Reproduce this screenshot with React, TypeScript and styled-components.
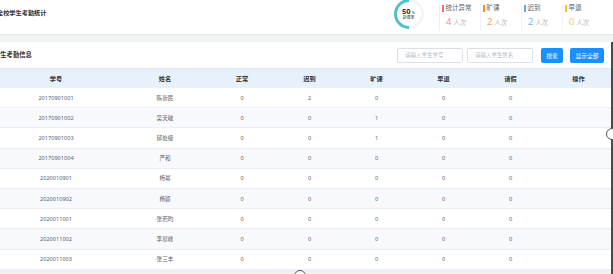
import * as React from 'react';
import styled, {createGlobalStyle} from 'styled-components';

type Student = {
  id: string;
  name: string;
  normal: number;
  late: number;
  absent: number;
  early: number;
  leave: number;
};

const students: Student[] = [
  {id: '20170901001', name: '陈新民', normal: 0, late: 2, absent: 0, early: 0, leave: 0},
  {id: '20170901002', name: '吴天敏', normal: 0, late: 0, absent: 1, early: 0, leave: 0},
  {id: '20170901003', name: '邱处级', normal: 0, late: 0, absent: 1, early: 0, leave: 0},
  {id: '20170901004', name: '严和', normal: 0, late: 0, absent: 0, early: 0, leave: 0},
  {id: '2020010901', name: '杨幂', normal: 0, late: 0, absent: 0, early: 0, leave: 0},
  {id: '2020010902', name: '杨颖', normal: 0, late: 0, absent: 0, early: 0, leave: 0},
  {id: '2020011001', name: '张若昀', normal: 0, late: 0, absent: 0, early: 0, leave: 0},
  {id: '2020011002', name: '李易峰', normal: 0, late: 0, absent: 0, early: 0, leave: 0},
  {id: '2020011003', name: '张三丰', normal: 0, late: 0, absent: 0, early: 0, leave: 0},
];

const stats = [
  {label: '统计异常', value: 4, bar: '#f56c6c', color: '#f78989'},
  {label: '旷课', value: 2, bar: '#ff8c1a', color: '#f9a94a'},
  {label: '迟到', value: 2, bar: '#5ea8f5', color: '#79b4f3'},
  {label: '早退', value: 0, bar: '#f5c02b', color: '#f6cf63'},
];

const columns = ['学号', '姓名', '正常', '迟到', '旷课', '早退', '请假', '操作'];

const GlobalStyle = createGlobalStyle`
  html, body {
    margin: 0;
    padding: 0;
    overflow: hidden;
    background: #f0f2f5;
  }
  body {
    font-family: "Noto Sans", "Noto Sans CJK SC", sans-serif;
    color: #606266;
  }
`;

const Page = styled.div`
  position: relative;
  width: 613px;
  height: 274px;
  overflow: hidden;
`;

// the screenshot is a crop of a wider page, so the content starts a little left of the edge
const Shift = styled.div`
  margin-left: -10px;
  width: 623px;
  display: flex;
  flex-direction: column;
  gap: 7px;
`;

const SummaryCard = styled.div`
  height: 35px;
  background: #fff;
  border-bottom: 1px solid #e6e8eb;
  box-sizing: border-box;
  display: flex;
  align-items: center;
  padding: 0 9px 0 7px;
`;

const Title = styled.div`
  font-size: 6.2px;
  font-weight: 700;
  color: #303133;
  flex: 1;
  margin-top: -10px;
`;

const Gauge = styled.div`
  position: relative;
  width: 30px;
  height: 30px;
  margin-right: 15px;
  margin-top: -6px;
  display: flex;
  flex-direction: column;
  align-items: center;
  justify-content: center;
`;

const GaugeRing = styled.svg`
  position: absolute;
  inset: 0;
`;

const GaugeValue = styled.div`
  font-size: 7.5px;
  font-weight: 700;
  color: #303133;
  line-height: 1;
  margin-left: -1px;

  small {
    font-size: 4px;
    font-weight: 400;
    margin-left: 1px;
  }
`;

const GaugeLabel = styled.div`
  font-size: 4px;
  color: #303133;
  line-height: 1;
  margin-top: 1px;
  margin-left: -1px;
`;

const StatList = styled.div`
  display: flex;
  height: 28px;
  border-left: 1px solid #ebeef5;
`;

const Stat = styled.div`
  width: 41px;
  padding-left: 2px;
  border-right: 1px solid #f2f3f6;
  display: flex;
  flex-direction: column;
  justify-content: space-between;
  padding-top: 1px;
  padding-bottom: 4px;
  box-sizing: border-box;

  &:last-child {
    border-right: none;
  }
`;

const StatLabel = styled.div<{$bar: string}>`
  display: flex;
  align-items: center;
  gap: 2px;
  font-size: 6.5px;
  color: #606266;
  line-height: 8px;

  &::before {
    content: '';
    width: 1.5px;
    height: 7px;
    background: ${p => p.$bar};
  }
`;

const StatValue = styled.div<{$color: string}>`
  padding-left: 4px;
  display: flex;
  align-items: baseline;
  gap: 2px;
  line-height: 9px;

  b {
    font-size: 9.5px;
    font-weight: 400;
    color: ${p => p.$color};
  }

  span {
    font-size: 6.3px;
    color: #b4b7bd;
  }
`;

const ListCard = styled.div`
  background: #fff;
  flex: 1;
`;

const ListHeader = styled.div`
  height: 26px;
  display: flex;
  align-items: center;
  padding: 0 9px 0 4px;
  gap: 4px;
`;

const ListTitle = styled.div`
  flex: 1;
  font-size: 6.3px;
  font-weight: 700;
  color: #303133;
  margin-top: -2px;
`;

const SearchInput = styled.input`
  width: 66px;
  height: 15px;
  box-sizing: border-box;
  border: 1px solid #dcdfe6;
  border-radius: 2px;
  padding: 0 7px;
  font-family: inherit;
  font-size: 5.5px;
  color: #606266;
  outline: none;

  &::placeholder {
    color: #b6b9bf;
  }
`;

const Button = styled.button<{$w: number}>`
  width: ${p => p.$w}px;
  height: 15px;
  border: none;
  border-radius: 2px;
  background: #1890ff;
  color: #fff;
  font-family: inherit;
  font-size: 5.8px;
  padding: 0;
  margin-left: ${p => (p.$w < 30 ? 4 : 3)}px;
`;

const Table = styled.div`
  display: grid;
  grid-template-columns: 132px 86px 68px 67px 67px 67px 67px 69px;
`;

const HeadCell = styled.div`
  height: 20px;
  background: #e7f1fc;
  border-top: 1px solid #dfe8f3;
  box-sizing: border-box;
  display: flex;
  align-items: center;
  justify-content: center;
  font-size: 6.2px;
  font-weight: 700;
  color: #303133;
`;

const Cell = styled.div<{$striped: boolean}>`
  height: 20.2px;
  box-sizing: border-box;
  border-bottom: 1px solid #ebeef5;
  background: ${p => (p.$striped ? '#f7f9fd' : '#fff')};
  display: flex;
  align-items: center;
  justify-content: center;
  font-size: 5.6px;
  color: #606266;
`;

const FrameEdge = styled.div`
  position: absolute;
  right: 0;
  top: 42px;
  bottom: -6px;
  width: 2px;
  background: #4a4a4a;
  border-bottom-right-radius: 4px;
`;

const Handle = styled.div<{$x: number; $y: number}>`
  position: absolute;
  left: ${p => p.$x}px;
  top: ${p => p.$y}px;
  width: 12px;
  height: 12px;
  box-sizing: border-box;
  border-radius: 50%;
  border: 1px solid #555;
  background: #fff;
`;

export default function App() {
  return (
    <Page>
      <GlobalStyle />
      <Shift>
        <SummaryCard>
          <Title>全校学生考勤统计</Title>
          <Gauge>
            <GaugeRing viewBox="0 0 30 30" width={30} height={30}>
              <circle cx="15" cy="15" r="13.5" fill="none" stroke="#f3f5f7" strokeWidth="3" />
              <path d="M15 1.5 A13.5 13.5 0 0 0 15 28.5" fill="none" stroke="#4cc1c7" strokeWidth="3" />
            </GaugeRing>
            <GaugeValue>
              50<small>%</small>
            </GaugeValue>
            <GaugeLabel>到课率</GaugeLabel>
          </Gauge>
          <StatList>
            {stats.map(s => (
              <Stat key={s.label}>
                <StatLabel $bar={s.bar}>{s.label}</StatLabel>
                <StatValue $color={s.color}>
                  <b>{s.value}</b>
                  <span>人次</span>
                </StatValue>
              </Stat>
            ))}
          </StatList>
        </SummaryCard>
        <ListCard>
          <ListHeader>
            <ListTitle>学生考勤信息</ListTitle>
            <SearchInput placeholder="请输入学生学号" />
            <SearchInput placeholder="请输入学生姓名" />
            <Button $w={22}>搜索</Button>
            <Button $w={34}>显示全部</Button>
          </ListHeader>
          <Table>
            {columns.map(c => (
              <HeadCell key={c}>{c}</HeadCell>
            ))}
            {students.map((s, i) =>
              [s.id, s.name, s.normal, s.late, s.absent, s.early, s.leave, ''].map((v, j) => (
                <Cell key={`${s.id}-${j}`} $striped={i % 2 === 1}>
                  {v}
                </Cell>
              ))
            )}
          </Table>
        </ListCard>
      </Shift>
      <FrameEdge />
      <Handle $x={606} $y={128} />
      <Handle $x={294} $y={270} />
    </Page>
  );
}
